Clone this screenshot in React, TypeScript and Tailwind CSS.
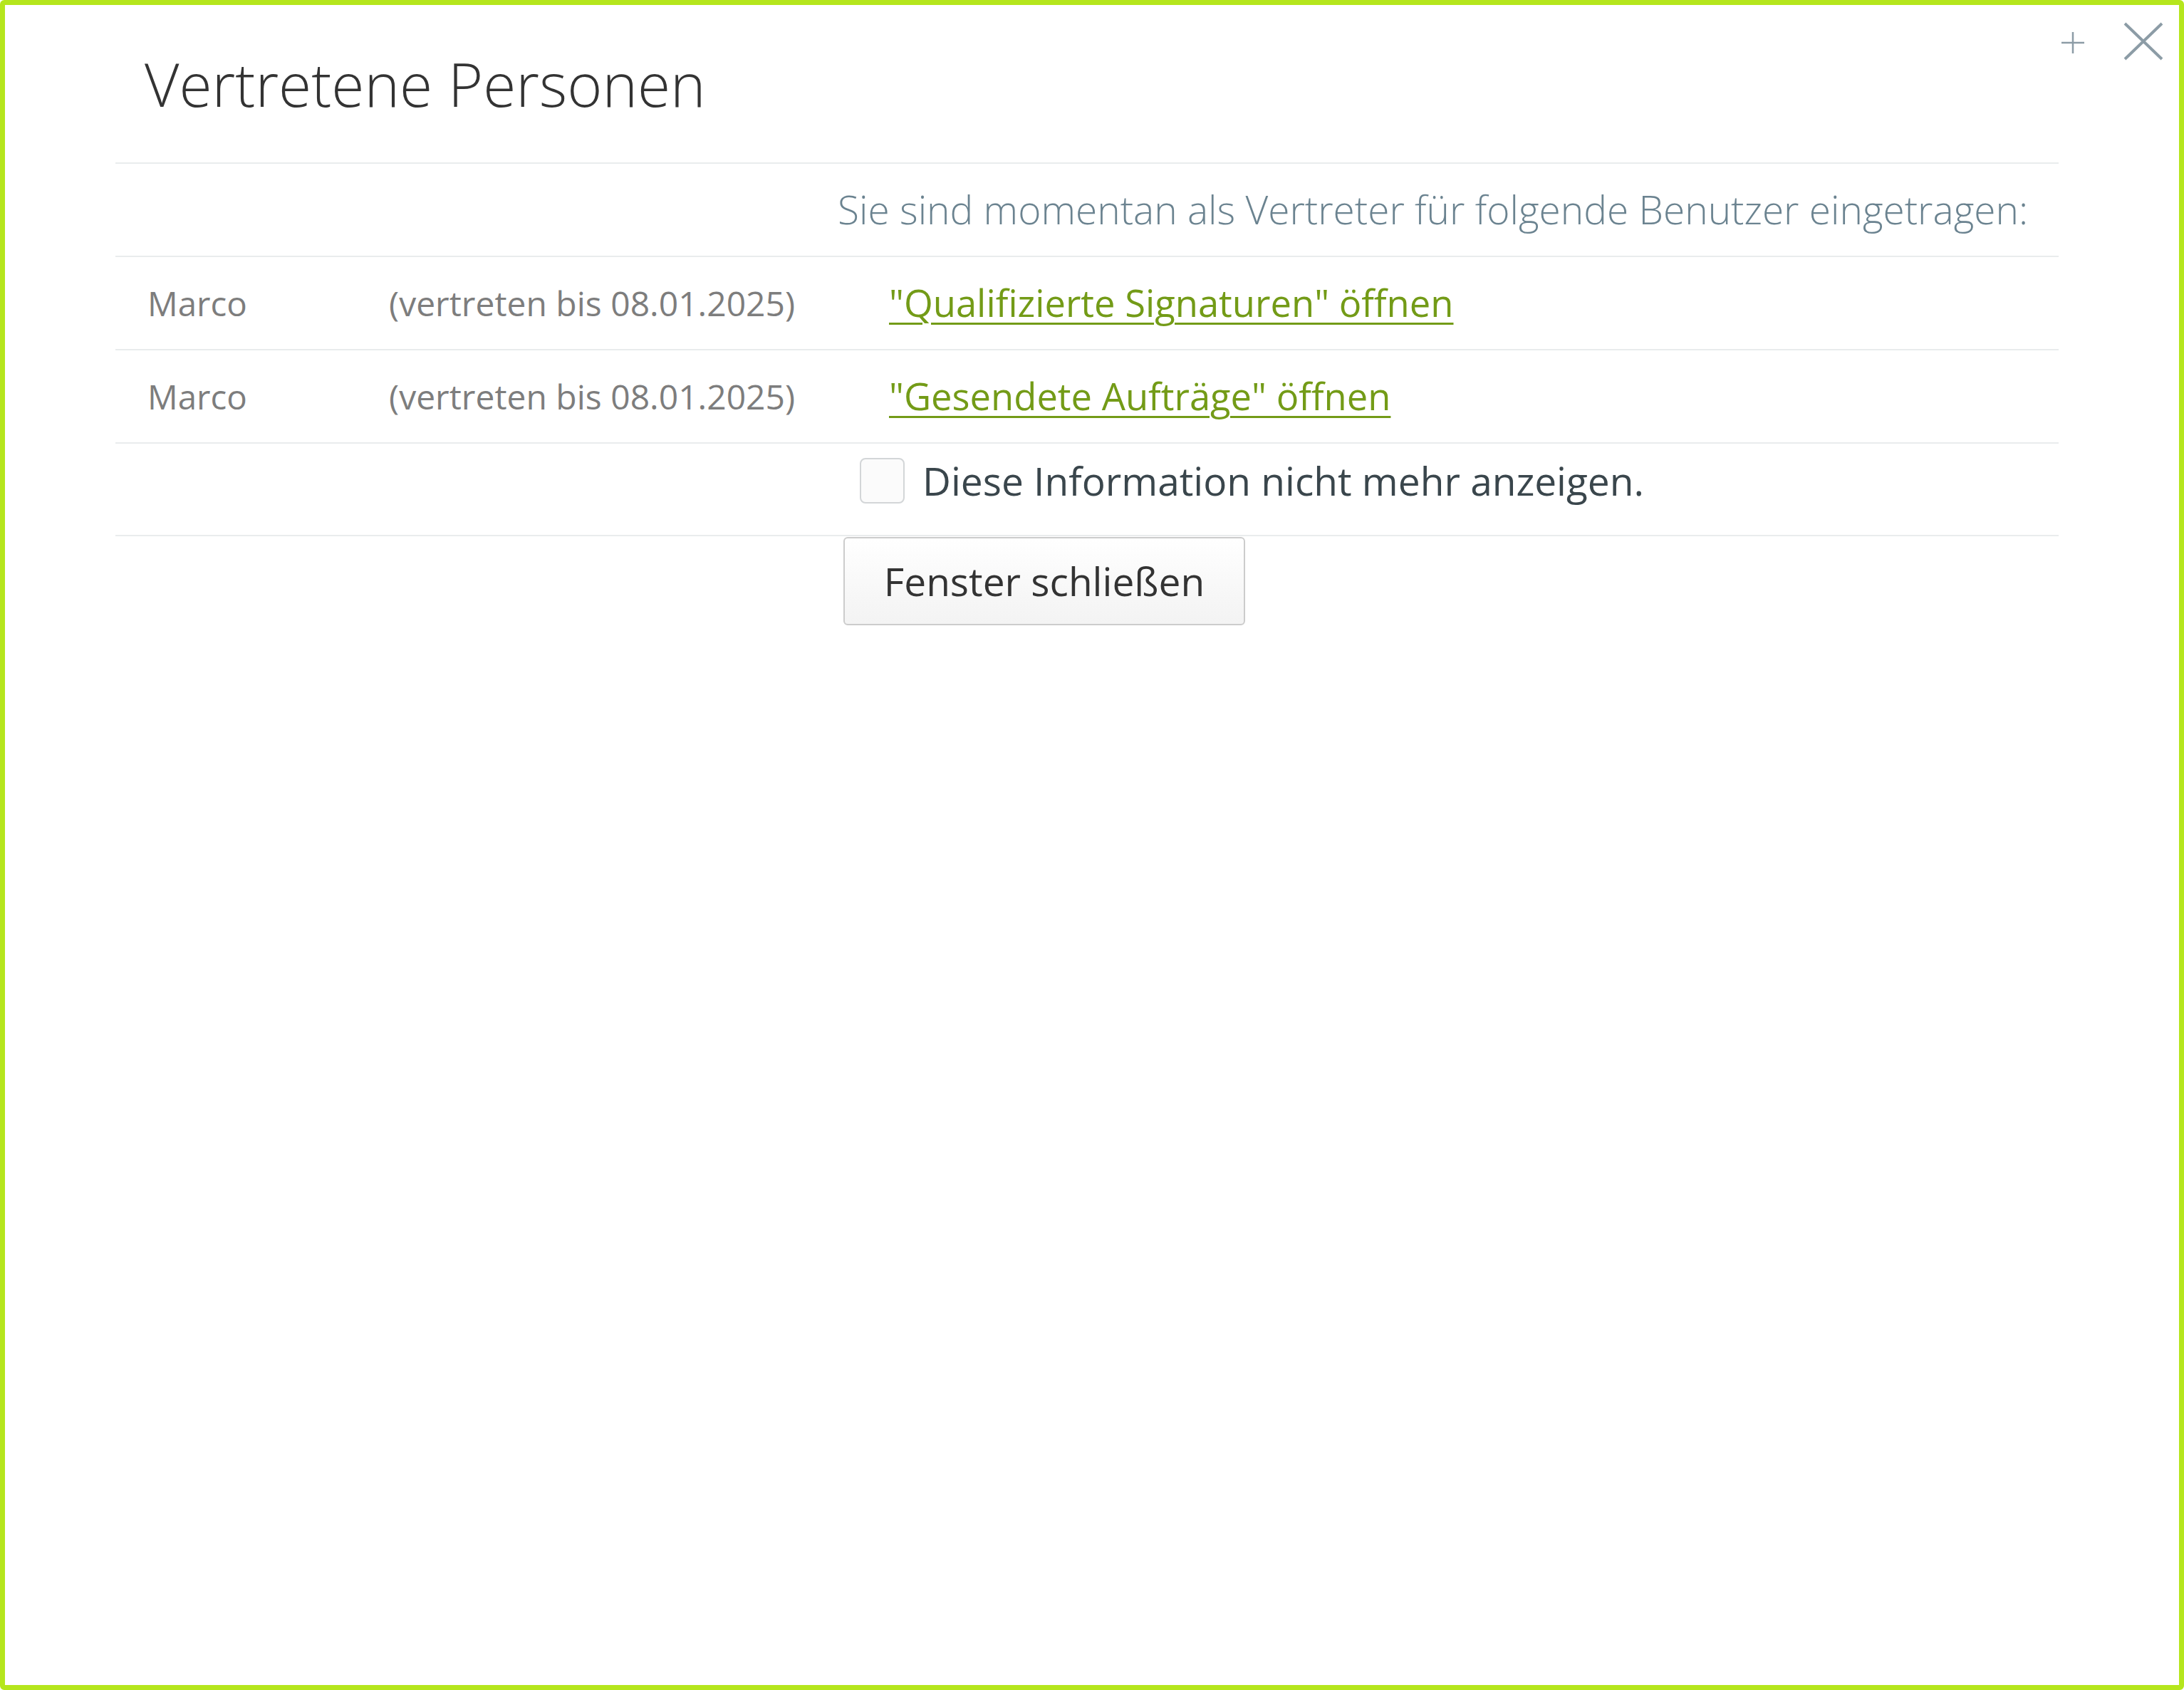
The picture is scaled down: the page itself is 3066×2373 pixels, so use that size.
import React from "react";

const font = { fontFamily: '"Open Sans", "Noto Sans", sans-serif' };

function Row({ name, until, link }: { name: string; until: string; link: string }) {
  return (
    <div className="flex h-[131px] items-center border-t-[2px] border-[#e9eced]">
      <div className="w-[384px] pl-[45px] text-[47.5px] text-[#7d7d7d]">{name}</div>
      <div className="w-[702px] text-[48px] text-[#7d7d7d]">{until}</div>
      <a href="#" className="text-[52.5px] text-[#739b17] underline decoration-[3px] underline-offset-[8px]">
        {link}
      </a>
    </div>
  );
}

export default function App() {
  return (
    <div
      style={font}
      className="relative h-[2373px] w-[3066px] overflow-hidden rounded-[6px] border-[7px] border-[#b5e61d] bg-white"
    >
      <div className="absolute right-[130px] top-[35px] h-[36px] w-[38px]">
        <svg viewBox="0 0 38 36" className="h-full w-full">
          <path d="M19 3v30M3 18h32" stroke="#8c9ca6" strokeWidth="2.5" fill="none" />
        </svg>
      </div>
      <div className="absolute right-[21px] top-[23px] h-[56px] w-[58px]">
        <svg viewBox="0 0 58 56" className="h-full w-full">
          <path d="M3 3l52 50M55 3L3 53" stroke="#8c9ca6" strokeWidth="4" fill="none" />
        </svg>
      </div>
      <div className="ml-[155px] w-[2728px]">
        <div className="h-[221px] pl-[41px] pt-[61px]">
          <h1 className="text-[84px] font-light leading-[100px] text-[#333333]">Vertretene Personen</h1>
        </div>
        <div className="flex h-[131px] items-center justify-end border-t-[2px] border-[#e9eced] pr-[43px]">
          <span className="text-[55px] font-light text-[#6b8390]">
            Sie sind momentan als Vertreter für folgende Benutzer eingetragen:
          </span>
        </div>
        <Row name="Marco" until="(vertreten bis 08.01.2025)" link={'"Qualifizierte Signaturen" öffnen'} />
        <Row name="Marco" until="(vertreten bis 08.01.2025)" link={'"Gesendete Aufträge" öffnen'} />
        <div className="flex h-[130px] items-start border-t-[2px] border-[#e9eced] pl-[1045px] pt-[20px]">
          <div className="h-[64px] w-[63px] rounded-[8px] border-[2px] border-[#d3d6d8] bg-[#fbfbfb]" />
          <span className="ml-[25px] text-[55px] leading-[64px] text-[#3a464c]">
            Diese Information nicht mehr anzeigen.
          </span>
        </div>
        <div className="border-t-[2px] border-[#e9eced] pl-[1022px]">
          <button className="mt-[1px] flex h-[124px] w-[564px] items-center justify-center rounded-[6px] border-[2px] border-[#cccccc] bg-gradient-to-b from-white to-[#f3f3f3] text-[55px] text-[#333333]">
            Fenster schließen
          </button>
        </div>
      </div>
    </div>
  );
}
